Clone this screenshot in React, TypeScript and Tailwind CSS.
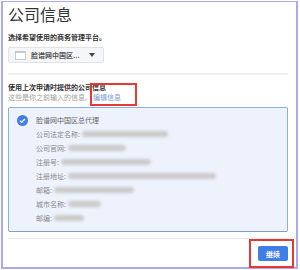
import React from "react";

const Blur = ({ w }: { w: number }) => (
  <span
    className="ml-[2px] inline-block h-[6px] rounded-full bg-[#cbcbcb] blur-[1.5px]"
    style={{ width: w }}
  />
);

const Row = ({ label, w }: { label: string; w: number }) => (
  <div className="flex h-[14px] items-center pl-[27px] text-[7px] leading-[14px] text-[#8a8a8a]">
    <span>{label}</span>
    <Blur w={w} />
  </div>
);

export default function App() {
  return (
    <div className="relative h-[270px] w-[300px] overflow-hidden bg-white pb-[1px] pl-[1px] pr-[2px] pt-[1px] font-['Noto_Sans_CJK_SC','Noto_Sans',sans-serif]">
      <div className="h-[268px] border-b-2 border-l-2 border-r-2 border-t border-[#a9a9f6] pl-[5px] pt-[4px]">
        <div className="text-[16px] leading-[16px] text-[#333]">公司信息</div>
        <div className="mt-[10px] text-[7px] font-bold leading-[10px] text-[#333]">选择希望使用的商务管理平台。</div>
        <div className="mt-[5px] flex h-[16px] w-[96px] items-center rounded-[2px] border border-[#e2e2e2] bg-[#f5f6f7] pl-[6px]">
          <span className="h-[9px] w-[11px] border border-t-2 border-[#c9c9c9] bg-white" />
          <span className="ml-[5px] text-[7px] font-bold leading-[10px] text-[#555]">脸谱网中国区...</span>
          <svg width="6" height="4" viewBox="0 0 6 4" className="ml-[9px]">
            <path d="M0 0h6L3 4z" fill="#444" />
          </svg>
        </div>
        <div className="mt-[10px] h-[2px] w-[280px] bg-[#efefef]" />
        <div className="mt-[7px] text-[7px] font-bold leading-[10px] text-[#333]">使用上次申请时提供的公司信息</div>
        <div className="text-[7px] leading-[10px] text-[#a0a0a0]">
          这些是你之前输入的信息。<span className="ml-[1px] text-[#7d9bd6]">编辑信息</span>
        </div>
        <div className="mt-[5px] h-[125px] w-[280px] rounded-[2px] border border-[#8fb0d6] border-b-[#7f9fbf] bg-[#edf2fc] pt-[5px]">
          <div className="flex h-[14px] items-center pl-[8px] text-[7px] leading-[14px] text-[#666]">
            <svg width="11" height="11" viewBox="0 0 11 11">
              <circle cx="5.5" cy="5.5" r="5.5" fill="#3f7ee6" />
              <path d="M3 5.7l1.7 1.6L8 4" stroke="#fff" strokeWidth="1.3" fill="none" />
            </svg>
            <span className="ml-[8px]">脸谱网中国区总代理</span>
          </div>
          <Row label="公司法定名称:" w={86} />
          <Row label="公司官网:" w={58} />
          <Row label="注册号:" w={90} />
          <Row label="注册地址:" w={148} />
          <Row label="邮箱:" w={80} />
          <Row label="城市名称:" w={33} />
          <Row label="邮编:" w={30} />
        </div>
        <div className="mt-[6px] h-[1px] w-[280px] bg-[#e8e8e8]" />
        <div className="mt-[7px] flex w-[280px] justify-end">
          <div className="flex h-[15px] w-[30px] items-center justify-center rounded-[2px] bg-[#3f7ee6] text-[7px] font-bold leading-[10px] text-white">
            继续
          </div>
        </div>
      </div>
      <div className="absolute left-[90px] top-[83px] h-[23px] w-[47px] border-2 border-[#e53935]" />
      <div className="absolute left-[249px] top-[239px] h-[29px] w-[45px] border-2 border-[#e53935]" />
    </div>
  );
}
